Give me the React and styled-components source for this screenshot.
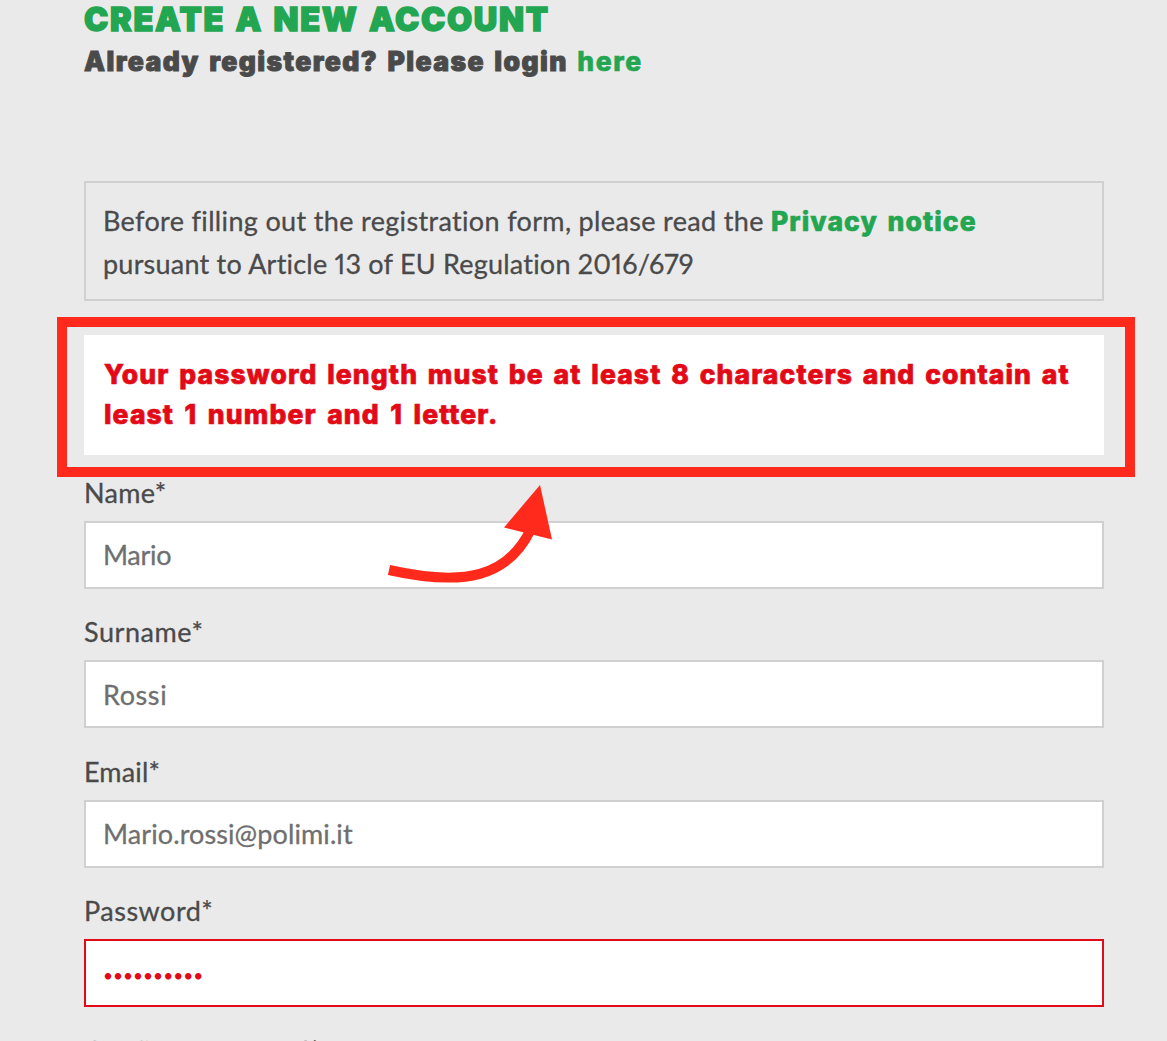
import React from 'react';
import styled, { createGlobalStyle } from 'styled-components';

const GlobalStyle = createGlobalStyle`
  * { box-sizing: border-box; }
  html, body { margin: 0; background: #eaeaea; overflow: hidden; }
`;

const regular = 'Lato, "Open Sans", sans-serif';
const heavy = 'Inter, "Open Sans", sans-serif';

const Page = styled.main`
  position: relative;
  height: 1041px;
  overflow: hidden;
  padding: 0 63px 0 84px;
  display: flex;
  flex-direction: column;
  background: #eaeaea;
  color: #4a4a4a;
  font: 400 27px/40px ${regular};
  font-variant-ligatures: none;
  font-variant-numeric: proportional-nums;
  -webkit-text-stroke: 0.3px currentColor;
`;

const Header = styled.header`
  height: 181px;
  flex: none;
  font-family: ${heavy};
  font-weight: 900;
  white-space: nowrap;
  -webkit-text-stroke: 0.9px currentColor;
`;

const Title = styled.h1`
  margin: 0;
  font-size: 32.5px;
  font-weight: 900;
  line-height: 40px;
  letter-spacing: 1.7px;
  word-spacing: 2.2px;
  color: #23a651;
  -webkit-text-stroke: 1.4px currentColor;
`;

const Subtitle = styled.p`
  margin: 0;
  padding-top: 1px;
  font-size: 26.5px;
  line-height: 40px;
  letter-spacing: 1.4px;
  word-spacing: 2.7px;
`;

const Link = styled.a`
  color: #23a651;
  font-family: ${heavy};
  font-weight: 800;
  font-size: 26.5px;
  letter-spacing: ${(p) => p.$spacing};
  word-spacing: 2.7px;
  -webkit-text-stroke: 0.6px currentColor;
`;

const Notice = styled.p`
  margin: 0;
  height: 120px;
  flex: none;
  padding: 16px 17px;
  border: 2px solid #d0d0d0;
  line-height: 43px;
  white-space: nowrap;
`;

const NoticeLine = styled.span`
  display: block;
  height: 43px;
  letter-spacing: ${(p) => p.$spacing};
`;

const Highlight = styled.section`
  height: 160px;
  flex: none;
  margin: 16px -31px 0 -27px;
  padding: 8px 21px 12px 17px;
  border: 10px solid #ff2a1c;
`;

const Alert = styled.div`
  height: 120px;
  padding: 19px 20px;
  background: #fff;
  color: #e30a17;
  font: 800 26.5px/40px ${heavy};
  letter-spacing: 1.1px;
  white-space: nowrap;
  -webkit-text-stroke: 0.7px currentColor;
`;

const AlertLine = styled.div`
  word-spacing: ${(p) => p.$gap};
`;

const Form = styled.form`
  flex: none;
  margin-top: -4.1px;
`;

const Field = styled.div`
  height: 139.5px;
  display: flex;
  flex-direction: column;
`;

const Label = styled.label`
  height: 48px;
  flex: none;
  line-height: 40px;
  letter-spacing: ${(p) => p.$spacing};
`;

const Input = styled.input`
  width: 100%;
  height: 68px;
  flex: none;
  padding: ${(p) => (p.type === 'password' ? '4px 17px 0' : '0 17px')};
  border: 2px solid ${(p) => (p.$invalid ? '#e30a17' : '#d0d0d0')};
  border-radius: 0;
  outline: none;
  background: #fff;
  color: ${(p) => (p.$invalid ? '#e30a17' : '#6f6f6f')};
  font: 400 ${(p) => (p.type === 'password' ? '17.3px' : '27px')} ${regular};
  letter-spacing: ${(p) => p.$spacing};
  -webkit-text-stroke: ${(p) => (p.type === 'password' ? '0' : '0.3px currentColor')};
`;

const Arrow = styled.svg`
  position: absolute;
  left: 380px;
  top: 480px;
`;

const fields = [
  { id: 'name', label: 'Name*', value: 'Mario', ls: '0.3px', vs: '-0.3px' },
  { id: 'surname', label: 'Surname*', value: 'Rossi', ls: '0.55px', vs: '0.6px' },
  { id: 'email', label: 'Email*', value: 'Mario.rossi@polimi.it', ls: '0.15px', vs: '0.1px' },
  { id: 'password', label: 'Password*', value: 'abcdefgh12', type: 'password', invalid: true, ls: '0.5px', vs: '0px' },
  { id: 'confirm', label: 'Confirm password*', value: '', type: 'password', ls: '0.6px', vs: '0px' },
];

export default function App() {
  return (
    <>
      <GlobalStyle />
      <Page>
        <Header>
          <Title>CREATE A NEW ACCOUNT</Title>
          <Subtitle>
            Already registered? Please login <Link $spacing="1.6px">here</Link>
          </Subtitle>
        </Header>
        <Notice>
          <NoticeLine $spacing="0.34px">
            Before filling out the registration form, please read the <Link $spacing="1.1px">Privacy notice</Link>
          </NoticeLine>
          <NoticeLine $spacing="0.22px">pursuant to Article 13 of EU Regulation 2016/679</NoticeLine>
        </Notice>
        <Highlight>
          <Alert role="alert">
            <AlertLine $gap="2.9px">Your password length must be at least 8 characters and contain at</AlertLine>
            <AlertLine $gap="3.6px">least 1 number and 1 letter.</AlertLine>
          </Alert>
        </Highlight>
        <Form>
          {fields.map((f) => (
            <Field key={f.id}>
              <Label htmlFor={f.id} $spacing={f.ls}>{f.label}</Label>
              <Input id={f.id} type={f.type || 'text'} defaultValue={f.value} $invalid={f.invalid} $spacing={f.vs} />
            </Field>
          ))}
        </Form>
        <Arrow width="180" height="110" viewBox="380 480 180 110" aria-hidden="true">
          <path d="M389 570 C465 587 508 577 531 529" fill="none" stroke="#ff2a1c" strokeWidth="10" />
          <path d="M540 485 L504 527.5 L552 539.5 Z" fill="#ff2a1c" />
        </Arrow>
      </Page>
    </>
  );
}
